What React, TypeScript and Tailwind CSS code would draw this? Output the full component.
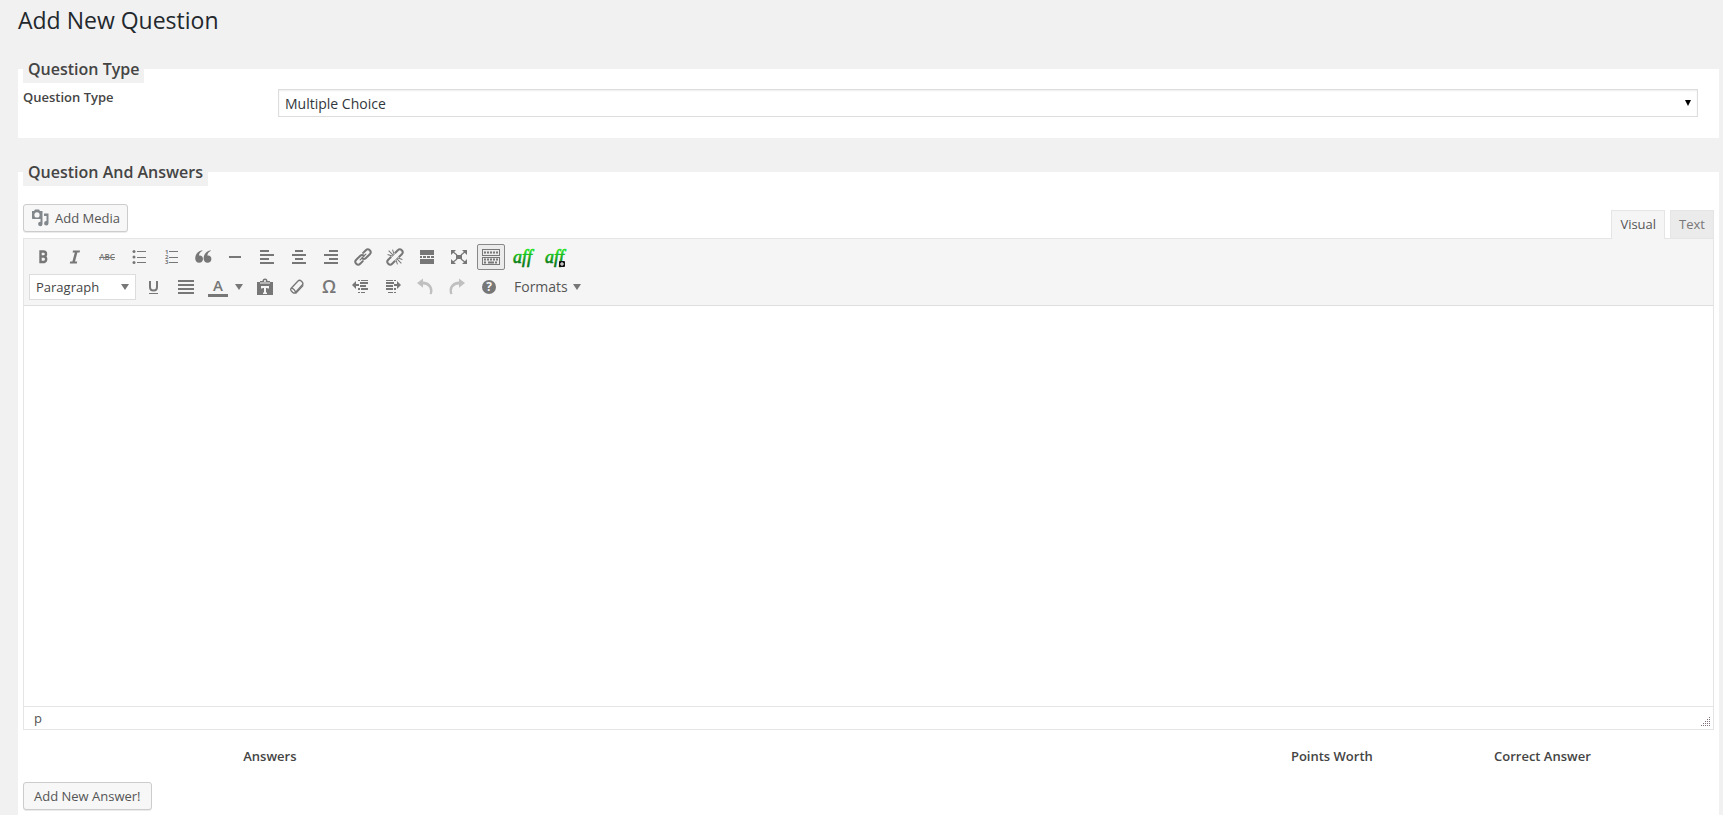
import type { ReactNode } from "react";

const Icon = ({ children }: { children: ReactNode }) => (
  <svg
    width="20"
    height="20"
    viewBox="0 0 20 20"
    fill="currentColor"
    className="shrink-0 overflow-visible"
    aria-hidden="true"
  >
    {children}
  </svg>
);

const Bars = ({ rows }: { rows: number[][] }) => (
  <Icon>
    {rows.map(([x, y, w, h]) => (
      <rect key={`${x}-${y}`} x={x} y={y} width={w} height={h ?? 2} />
    ))}
  </Icon>
);

const Caret = () => (
  <svg width="8" height="6" viewBox="0 0 8 6" fill="currentColor" aria-hidden="true">
    <path d="M0 0h8L4 6z" />
  </svg>
);

const AffLogo = ({ id, badge }: { id: string; badge?: boolean }) => (
  <svg
    width="20"
    height="22"
    viewBox="0 0 20 22"
    className="shrink-0 overflow-visible"
    aria-hidden="true"
  >
    <defs>
      <linearGradient id={id} x1="0" y1="0" x2="0" y2="1">
        <stop offset="0.2" stopColor="#1fe01f" />
        <stop offset="0.8" stopColor="#067a10" />
      </linearGradient>
    </defs>
    <text
      x="0"
      y="17"
      fontSize="18"
      fontStyle="italic"
      fill={`url(#${id})`}
      stroke={`url(#${id})`}
      strokeWidth="0.6"
      className="font-['Liberation_Serif',serif]"
    >
      aff
    </text>
    {badge && (
      <>
        <rect x="14" y="15" width="6" height="6" rx="1" fill="#111" />
        <path d="M17 16v4M15 18h4" stroke="#fff" strokeWidth="1" />
      </>
    )}
  </svg>
);

const firstRow: { label: string; icon: ReactNode; active?: boolean }[] = [
  {
    label: "Bold",
    icon: (
      <Icon>
        <path
          d="M7.500 4.500h3a2.500 2.500 0 0 1 0 5h-3zM7.500 9.500h3.700a2.900 2.900 0 0 1 0 5.500H7.500z"
          fill="none"
          stroke="currentColor"
          strokeWidth="2.400"
        />
      </Icon>
    ),
  },
  {
    label: "Italic",
    icon: (
      <Icon>
        <path d="M8 3.500h7l-.4 2h-2.200L10 14.500h2.200l-.4 2h-7l.4-2h2.200L9.800 5.500H7.600z" />
      </Icon>
    ),
  },
  {
    label: "Strikethrough",
    icon: (
      <Icon>
        <text x="10" y="13" fontSize="8" fontWeight="600" textAnchor="middle">
          ABC
        </text>
        <rect x="2" y="10" width="16" height="1" />
      </Icon>
    ),
  },
  {
    label: "Bulleted list",
    icon: (
      <Icon>
        <circle cx="5" cy="4.500" r="1.500" />
        <circle cx="5" cy="10" r="1.500" />
        <circle cx="5" cy="15.500" r="1.500" />
        <path d="M8 4h9v1H8zM8 10h9v1H8zM8 15h9v1H8z" />
      </Icon>
    ),
  },
  {
    label: "Numbered list",
    icon: (
      <Icon>
        <g fontSize="6" fontWeight="700">
          <text x="4" y="7">1</text>
          <text x="4" y="12">2</text>
          <text x="4" y="17">3</text>
        </g>
        <path d="M8 4h9v1H8zM8 10h9v1H8zM8 15h9v1H8z" />
      </Icon>
    ),
  },
  {
    label: "Blockquote",
    icon: (
      <Icon>
        <path d="M9.500 3.800C7.300 5 6 6.600 6 8.600c2.200-.5 4 1 4 3.400 0 2.200-1.600 3.800-3.800 3.800-2.500 0-4-1.900-4-4.600C2.200 7.400 5 4.100 9.200 3.300z" />
        <path d="M17.900 3.800c-2.200 1.200-3.500 2.800-3.500 4.800 2.200-.5 4 1 4 3.400 0 2.200-1.600 3.800-3.800 3.800-2.500 0-4-1.900-4-4.600 0-3.800 2.800-7.100 7-7.900z" />
      </Icon>
    ),
  },
  { label: "Horizontal line", icon: <Bars rows={[[4, 9, 12]]} /> },
  { label: "Align left", icon: <Bars rows={[[3, 3, 9], [3, 7, 14], [3, 11, 9], [3, 15, 14]]} /> },
  { label: "Align center", icon: <Bars rows={[[6, 3, 8], [3, 7, 14], [6, 11, 8], [3, 15, 14]]} /> },
  { label: "Align right", icon: <Bars rows={[[8, 3, 9], [3, 7, 14], [8, 11, 9], [3, 15, 14]]} /> },
  {
    label: "Insert link",
    icon: (
      <Icon>
        <g
          transform="rotate(-45 10 10)"
          fill="none"
          stroke="currentColor"
          strokeWidth="2"
          strokeLinecap="round"
        >
          <path d="M11.500 9.500a2.800 2.800 0 0 0-2.500-2.300H3.200a2.800 2.800 0 0 0 0 5.600H7" />
          <path d="M8.500 10.500a2.800 2.800 0 0 0 2.500 2.300h5.800a2.800 2.800 0 0 0 0-5.600H13" />
          <path d="M6 10h8" strokeWidth="1.200" />
        </g>
      </Icon>
    ),
  },
  {
    label: "Remove link",
    icon: (
      <Icon>
        <g transform="rotate(-45 10 10)" fill="none" stroke="currentColor">
          <path
            d="M7.500 7.200H3.200a2.800 2.800 0 0 0 0 5.600h4.300M12.500 7.200h4.300a2.800 2.800 0 0 1 0 5.600h-4.300"
            strokeWidth="2"
          />
          <path
            d="M10 1v7M10 12v7M6.500 3l2.500 5M13.500 3L11 8M6.500 17L9 12M13.500 17L11 12"
            strokeWidth="1"
          />
        </g>
      </Icon>
    ),
  },
  {
    label: "Read more",
    icon: (
      <Bars
        rows={[[3, 3, 14, 5], [3, 9, 2], [6, 9, 3], [10, 9, 3], [14, 9, 3], [3, 12, 14, 5]]}
      />
    ),
  },
  {
    label: "Fullscreen",
    icon: (
      <Icon>
        <path d="M7 8h6v4H7zM2 3h5L2 8zM18 3v5l-5-5zM2 17v-5l5 5zM18 17h-5l5-5z" />
        <path d="M3 4l5 4M17 4l-5 4M3 16l5-4M17 16l-5-4" stroke="currentColor" strokeWidth="1.300" />
      </Icon>
    ),
  },
  {
    label: "Toolbar toggle",
    active: true,
    icon: (
      <Icon>
        <g fill="none" stroke="currentColor">
          <rect x="1.500" y="2.500" width="17" height="6" />
          <rect x="1.500" y="10.500" width="17" height="7" />
          <path d="M3 5.500h14" strokeWidth="2" strokeDasharray="2 1" />
          <path d="M3 12.500h14M3 15.500h3M14 15.500h3" strokeWidth="2" strokeDasharray="2 1" />
          <path d="M7 15.500h6" strokeWidth="2" />
        </g>
      </Icon>
    ),
  },
  { label: "Affiliate link", icon: <AffLogo id="aff" /> },
  { label: "Add affiliate link", icon: <AffLogo id="affAdd" badge /> },
];

const secondRow: { label: string; icon: ReactNode; disabled?: boolean }[] = [
  {
    label: "Paste as text",
    icon: (
      <Icon>
        <path
          fillRule="evenodd"
          d="M2 5h3V4h2.500a2.500 2.500 0 0 1 5 0H15v1h3v13H2zM10 3a1 1 0 1 0 0 2 1 1 0 0 0 0-2zM5 5.500v1h10v-1zM6 9v2.500h1.500V11H9v4.500H8V17h4v-1.500h-1V11h1.500v.5H14V9z"
        />
      </Icon>
    ),
  },
  {
    label: "Clear formatting",
    icon: (
      <Icon>
        <path
          d="M4 11.500L11 4c1-1 2.200-1 3.200 0l1 1c.9.9.9 2 0 3l-6.800 7.500c-.8.8-1.800.8-2.600 0L4.300 14c-.8-.8-.9-1.700-.3-2.500zM4 11.500c2-.4 4.500 1.700 4.400 4"
          fill="none"
          stroke="currentColor"
          strokeWidth="1.300"
        />
        <path d="M8 16.500l7.500-8.200.5-1.800.5 2.500L9 17z" />
      </Icon>
    ),
  },
  {
    label: "Special character",
    icon: (
      <Icon>
        <text x="10" y="16" fontSize="18" fontWeight="600" textAnchor="middle">
          Ω
        </text>
      </Icon>
    ),
  },
  {
    label: "Decrease indent",
    icon: (
      <Icon>
        <path d="M5 4v3h3v2H5v3L1 8z" />
        <path d="M7 3h2v1H7zM10 3h7v1h-7zM9 5h8v2H9zM9 8h6v2H9zM7 11h2v2H7zM10 11h7v2h-7zM7 15h2v1H7zM10 15h4v1h-4z" />
      </Icon>
    ),
  },
  {
    label: "Increase indent",
    icon: (
      <Icon>
        <path d="M14 4v3h-3v2h3v3l4-4z" />
        <path d="M3 3h7v1H3zM11 3h2v1h-2zM3 5h8v2H3zM3 8h7v2H3zM3 11h7v2H3zM11 11h2v2h-2zM5 15h5v1H5zM11 15h2v1h-2z" />
      </Icon>
    ),
  },
  {
    label: "Undo",
    disabled: true,
    icon: (
      <Icon>
        <path d="M8 1.500v3c5.500.2 9.500 4 9.500 9 0 1.500-.3 2.700-.8 3.800l-2.200-.3c.3-.8.500-1.800.5-2.800 0-4-2.500-6.500-7-6.700v3.300L2 6z" />
      </Icon>
    ),
  },
  {
    label: "Redo",
    disabled: true,
    icon: (
      <Icon>
        <path d="M12 1.500v3c-5.500.2-9.500 4-9.500 9 0 1.500.3 2.700.8 3.800l2.200-.3c-.3-.8-.5-1.800-.5-2.800 0-4 2.500-6.500 7-6.700v3.300L18 6z" />
      </Icon>
    ),
  },
  {
    label: "Keyboard shortcuts",
    icon: (
      <Icon>
        <circle cx="10" cy="10" r="7" />
        <text x="10" y="14" fontSize="12" fontWeight="700" textAnchor="middle" fill="#f5f5f5">
          ?
        </text>
      </Icon>
    ),
  },
];

type ToolProps = { label: string; children: ReactNode; active?: boolean; disabled?: boolean };

const Tool = ({ label, children, active, disabled }: ToolProps) => (
  <button
    type="button"
    aria-label={label}
    disabled={disabled}
    className={`flex h-[26px] w-7 items-center justify-center rounded-xs border ${
      active ? "border-[#888] bg-[#ebebeb]" : "border-transparent"
    } ${disabled ? "text-[#c0c0c0]" : "text-[#777]"}`}
  >
    {children}
  </button>
);

const Toolbar = () => (
  <div className="border-b border-[#dedede] bg-[#f5f5f5] px-[5px] py-[3px]">
    <div className="flex h-[30px] items-center gap-1">
      {firstRow.map((t) => (
        <Tool key={t.label} label={t.label} active={t.active}>
          {t.icon}
        </Tool>
      ))}
    </div>
    <div className="flex h-[30px] items-center gap-1">
      <button
        type="button"
        className="flex h-[26px] w-[107px] items-center justify-between border border-[#ddd] bg-white px-1.5 text-[13px] text-[#444]"
      >
        Paragraph
        <span className="text-[#777]">
          <Caret />
        </span>
      </button>
      <Tool label="Underline">
        <Icon>
          <path
            d="M6 4v6c0 2.200 1.200 3.500 3.500 3.500s3.500-1.300 3.500-3.500V4"
            fill="none"
            stroke="currentColor"
            strokeWidth="2"
          />
          <rect x="5" y="16" width="9" height="1" />
        </Icon>
      </Tool>
      <Tool label="Justify">
        <Bars rows={[[2, 3, 16], [2, 7, 16], [2, 11, 16], [2, 15, 16]]} />
      </Tool>
      <div className="flex">
        <Tool label="Text color">
          <Icon>
            <text x="10" y="14" fontSize="15" fontWeight="600" textAnchor="middle">
              A
            </text>
            <rect x="0" y="17" width="20" height="3" />
          </Icon>
        </Tool>
        <button
          type="button"
          aria-label="Choose text color"
          className="mr-0.5 flex w-[13px] items-center justify-center text-[#777]"
        >
          <Caret />
        </button>
      </div>
      {secondRow.map((t) => (
        <Tool key={t.label} label={t.label} disabled={t.disabled}>
          {t.icon}
        </Tool>
      ))}
      <button
        type="button"
        className="flex h-[26px] items-center gap-[5px] px-[7px] text-sm text-[#555]"
      >
        Formats
        <span className="text-[#777]">
          <Caret />
        </span>
      </button>
    </div>
  </div>
);

const gripDots = [0, 1, 2, 3, 4].flatMap((row) =>
  Array.from({ length: row + 1 }, (_, i) => [(4 - i) * 2, row * 2])
);

const Editor = () => (
  <div>
    <div className="flex items-start justify-between">
      <button
        type="button"
        className="flex h-7 items-center gap-1.5 rounded-[3px] border border-[#ccc] bg-[#f7f7f7] px-[7px] text-[13px] text-[#555] shadow-[0_1px_0_rgba(0,0,0,0.08)]"
      >
        <svg width="18" height="18" viewBox="0 0 18 18" fill="#82878c" aria-hidden="true">
          <path
            fillRule="evenodd"
            d="M1 2h2l1-1.500h4L9 2h2.500v8H1.500Q1 10 1 9zM6 3.300a2.600 2.600 0 1 0 0 5.200 2.600 2.600 0 0 0 0-5.200z"
          />
          <path d="M13 4.500h4.500v9.800a2.200 2.200 0 1 1-2-2.200V7H13z" />
          <path d="M11.500 10v5a2.200 2.200 0 1 1-2-2.200V10z" />
        </svg>
        Add Media
      </button>
      <div className="mt-1.5 flex gap-[5px] text-[13px]">
        <button
          type="button"
          className="relative -mb-px h-[29px] border border-b-0 border-[#e5e5e5] bg-[#f5f5f5] px-2 pb-0.5 text-[#555]"
        >
          Visual
        </button>
        <button
          type="button"
          className="h-7 border border-b-0 border-[#e5e5e5] bg-[#ebebeb] px-2 pb-0.5 text-[#777]"
        >
          Text
        </button>
      </div>
    </div>
    <div className="border border-[#e5e5e5]">
      <Toolbar />
      <div
        contentEditable
        suppressContentEditableWarning
        role="textbox"
        aria-label="Question"
        className="h-[400px] bg-white p-2.5 outline-none"
      />
      <div className="flex h-[23px] items-center justify-between border-t border-[#e5e5e5] pr-[3px] pl-2.5 text-[13px] text-[#555]">
        <span>p</span>
        <svg width="9" height="9" fill="#80707c" className="mt-1.5" aria-hidden="true">
          {gripDots.map(([x, y]) => (
            <rect key={`${x}-${y}`} x={x} y={y} width="1" height="1" />
          ))}
        </svg>
      </div>
    </div>
  </div>
);

const Legend = ({ children }: { children: ReactNode }) => (
  <legend className="h-7 bg-[#f1f1f1] px-[5px] text-base leading-7 font-semibold text-[#444]">
    {children}
  </legend>
);

const App = () => {
  return (
    <main className="min-h-screen bg-[#f1f1f1] pt-1.5 pr-1 pl-[18px] font-['Open_Sans',sans-serif] text-[13px] leading-5 text-[#444]">
      <h1 className="mb-5 text-[23px] leading-[29px] font-normal text-[#23282d]">
        Add New Question
      </h1>

      <fieldset className="mb-5 bg-white px-[5px] pb-[21px]">
        <Legend>Question Type</Legend>
        <div className="flex items-start pt-1">
          <label htmlFor="question-type" className="w-[255px] font-semibold">
            Question Type
          </label>
          <div className="relative mt-0.5 mr-4 flex-1">
            <select
              id="question-type"
              className="block h-7 w-full appearance-none border border-[#ddd] bg-white px-1.5 pt-0.5 text-sm text-[#32373c] shadow-[inset_0_1px_2px_rgba(0,0,0,0.07)]"
            >
              <option>Multiple Choice</option>
            </select>
            <svg
              width="6"
              height="6"
              viewBox="0 0 6 6"
              className="pointer-events-none absolute top-[11px] right-[7px]"
              aria-hidden="true"
            >
              <path d="M0 0h6L3 6z" />
            </svg>
          </div>
        </div>
      </fieldset>

      <fieldset className="bg-white px-[5px] pb-1.5">
        <Legend>Question And Answers</Legend>
        <div className="pt-[18px]">
          <Editor />
        </div>
        <table className="my-4 w-full table-fixed">
          <thead>
            <tr>
              <th className="w-[29.2%] p-0 font-semibold">Answers</th>
              <td />
              <th className="w-[12.4%] p-0 font-semibold">Points Worth</th>
              <th className="w-[12.5%] p-0 font-semibold">Correct Answer</th>
              <td className="w-[3.9%]" />
            </tr>
          </thead>
        </table>
        <button
          type="button"
          className="block h-7 rounded-[3px] border border-[#ccc] bg-[#f7f7f7] px-2.5 text-[13px] text-[#555] shadow-[0_1px_0_rgba(0,0,0,0.08)]"
        >
          Add New Answer!
        </button>
      </fieldset>
    </main>
  );
};

export default App;
